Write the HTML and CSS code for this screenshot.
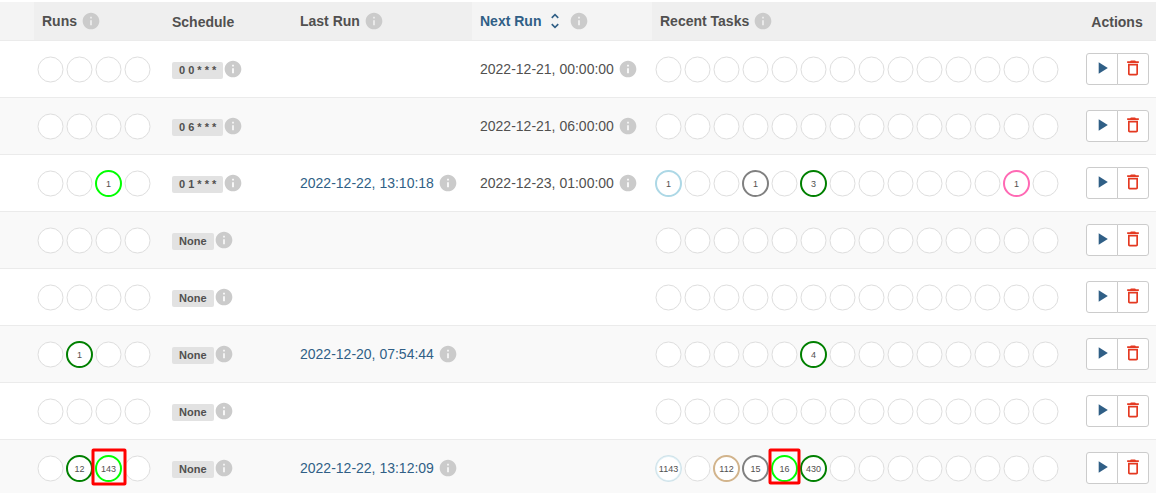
FILE: index.html
```html
<!DOCTYPE html>
<html lang="en">
<head>
<meta charset="utf-8">
<title>DAGs</title>
<link rel="stylesheet" href="styles.css">
</head>
<body>
<svg class="sprite" aria-hidden="true">
  <symbol id="info" viewBox="0 0 24 24"><path d="M12 2C6.48 2 2 6.48 2 12s4.480 10 10 10 10-4.480 10-10S17.520 2 12 2zm1 15h-2v-6h2v6zm0-8h-2V7h2v2z"/></symbol>
  <symbol id="sort" viewBox="0 0 24 24"><path d="M12 5.830L15.170 9l1.410-1.410L12 3 7.410 7.590 8.830 9 12 5.830zm0 12.340L8.830 15l-1.410 1.410L12 21l4.590-4.590L15.170 15 12 18.170z"/></symbol>
  <symbol id="play" viewBox="0 0 24 24"><path d="M8 5v14l11-7z"/></symbol>
  <symbol id="trash" viewBox="0 0 24 24"><path d="M6 19c0 1.100 .9 2 2 2h8c1.100 0 2-.9 2-2V7H6v12zM8 9h8v10H8V9zm7.500-5l-1-1h-5l-1 1H5v2h14V4z"/></symbol>
  <g id="slots4">
    <circle cx="14.5" cy="15.5" r="12.5"/><circle cx="43.5" cy="15.5" r="12.5"/><circle cx="72.5" cy="15.5" r="12.5"/><circle cx="101.5" cy="15.5" r="12.5"/>
  </g>
  <g id="slots14">
    <use href="#slots4"/><use href="#slots4" x="116"/><use href="#slots4" x="232"/>
    <circle cx="362.5" cy="15.5" r="12.5"/><circle cx="391.5" cy="15.5" r="12.5"/>
  </g>
</svg>
<main>
<table class="dags">
  <colgroup>
    <col class="col-lead"><col class="col-runs"><col class="col-schedule"><col class="col-date"><col class="col-date"><col class="col-tasks"><col class="col-actions">
  </colgroup>
  <thead>
    <tr>
      <th class="sortable"></th>
      <th>Runs <svg class="icon info"><use href="#info"/></svg></th>
      <th class="plain">Schedule</th>
      <th>Last Run <svg class="icon info"><use href="#info"/></svg></th>
      <th class="sortable"><a href="#next-run">Next Run <svg class="icon"><use href="#sort"/></svg></a> <svg class="icon info"><use href="#info"/></svg></th>
      <th>Recent Tasks <svg class="icon info"><use href="#info"/></svg></th>
      <th class="plain actions">Actions</th>
    </tr>
  </thead>
  <tbody>
    <tr>
      <td></td>
      <td class="states"><svg class="runs"><use href="#slots4"/></svg></td>
      <td><a class="label" href="#schedule">0 0 * * *</a><svg class="icon info"><use href="#info"/></svg></td>
      <td></td>
      <td><time>2022-12-21, 00:00:00</time> <svg class="icon info"><use href="#info"/></svg></td>
      <td class="states"><svg class="tasks"><use href="#slots14"/></svg></td>
      <td class="actions"><div class="btn-group"><button type="button" aria-label="Trigger DAG"><svg class="icon"><use href="#play"/></svg></button><button type="button" class="danger" aria-label="Delete DAG"><svg class="icon"><use href="#trash"/></svg></button></div></td>
    </tr>
    <tr>
      <td></td>
      <td class="states"><svg class="runs"><use href="#slots4"/></svg></td>
      <td><a class="label" href="#schedule">0 6 * * *</a><svg class="icon info"><use href="#info"/></svg></td>
      <td></td>
      <td><time>2022-12-21, 06:00:00</time> <svg class="icon info"><use href="#info"/></svg></td>
      <td class="states"><svg class="tasks"><use href="#slots14"/></svg></td>
      <td class="actions"><div class="btn-group"><button type="button" aria-label="Trigger DAG"><svg class="icon"><use href="#play"/></svg></button><button type="button" class="danger" aria-label="Delete DAG"><svg class="icon"><use href="#trash"/></svg></button></div></td>
    </tr>
    <tr>
      <td></td>
      <td class="states"><svg class="runs"><use href="#slots4"/>
        <g class="state running"><circle cx="72.5" cy="15.5" r="12.5"/><text x="72.5" y="19">1</text></g></svg></td>
      <td><a class="label" href="#schedule">0 1 * * *</a><svg class="icon info"><use href="#info"/></svg></td>
      <td><a href="#run"><time>2022-12-22, 13:10:18</time></a> <svg class="icon info"><use href="#info"/></svg></td>
      <td><time>2022-12-23, 01:00:00</time> <svg class="icon info"><use href="#info"/></svg></td>
      <td class="states"><svg class="tasks"><use href="#slots14"/>
        <g class="state none"><circle cx="14.5" cy="15.5" r="12.5"/><text x="14.5" y="19">1</text></g>
        <g class="state queued"><circle cx="101.5" cy="15.5" r="12.5"/><text x="101.5" y="19">1</text></g>
        <g class="state success"><circle cx="159.5" cy="15.5" r="12.5"/><text x="159.5" y="19">3</text></g>
        <g class="state skipped"><circle cx="362.5" cy="15.5" r="12.5"/><text x="362.5" y="19">1</text></g></svg></td>
      <td class="actions"><div class="btn-group"><button type="button" aria-label="Trigger DAG"><svg class="icon"><use href="#play"/></svg></button><button type="button" class="danger" aria-label="Delete DAG"><svg class="icon"><use href="#trash"/></svg></button></div></td>
    </tr>
    <tr>
      <td></td>
      <td class="states"><svg class="runs"><use href="#slots4"/></svg></td>
      <td><a class="label" href="#schedule">None</a><svg class="icon info"><use href="#info"/></svg></td>
      <td></td>
      <td></td>
      <td class="states"><svg class="tasks"><use href="#slots14"/></svg></td>
      <td class="actions"><div class="btn-group"><button type="button" aria-label="Trigger DAG"><svg class="icon"><use href="#play"/></svg></button><button type="button" class="danger" aria-label="Delete DAG"><svg class="icon"><use href="#trash"/></svg></button></div></td>
    </tr>
    <tr>
      <td></td>
      <td class="states"><svg class="runs"><use href="#slots4"/></svg></td>
      <td><a class="label" href="#schedule">None</a><svg class="icon info"><use href="#info"/></svg></td>
      <td></td>
      <td></td>
      <td class="states"><svg class="tasks"><use href="#slots14"/></svg></td>
      <td class="actions"><div class="btn-group"><button type="button" aria-label="Trigger DAG"><svg class="icon"><use href="#play"/></svg></button><button type="button" class="danger" aria-label="Delete DAG"><svg class="icon"><use href="#trash"/></svg></button></div></td>
    </tr>
    <tr>
      <td></td>
      <td class="states"><svg class="runs"><use href="#slots4"/>
        <g class="state success"><circle cx="43.5" cy="15.5" r="12.5"/><text x="43.5" y="19">1</text></g></svg></td>
      <td><a class="label" href="#schedule">None</a><svg class="icon info"><use href="#info"/></svg></td>
      <td><a href="#run"><time>2022-12-20, 07:54:44</time></a> <svg class="icon info"><use href="#info"/></svg></td>
      <td></td>
      <td class="states"><svg class="tasks"><use href="#slots14"/>
        <g class="state success"><circle cx="159.5" cy="15.5" r="12.5"/><text x="159.5" y="19">4</text></g></svg></td>
      <td class="actions"><div class="btn-group"><button type="button" aria-label="Trigger DAG"><svg class="icon"><use href="#play"/></svg></button><button type="button" class="danger" aria-label="Delete DAG"><svg class="icon"><use href="#trash"/></svg></button></div></td>
    </tr>
    <tr>
      <td></td>
      <td class="states"><svg class="runs"><use href="#slots4"/></svg></td>
      <td><a class="label" href="#schedule">None</a><svg class="icon info"><use href="#info"/></svg></td>
      <td></td>
      <td></td>
      <td class="states"><svg class="tasks"><use href="#slots14"/></svg></td>
      <td class="actions"><div class="btn-group"><button type="button" aria-label="Trigger DAG"><svg class="icon"><use href="#play"/></svg></button><button type="button" class="danger" aria-label="Delete DAG"><svg class="icon"><use href="#trash"/></svg></button></div></td>
    </tr>
    <tr>
      <td></td>
      <td class="states"><svg class="runs"><use href="#slots4"/>
        <g class="state success"><circle cx="43.5" cy="15.5" r="12.5"/><text x="43.5" y="19">12</text></g>
        <g class="state running"><circle cx="72.5" cy="15.5" r="12.5"/><text x="72.5" y="19">143</text></g>
        <rect class="highlight" x="57" y="-3" width="32" height="34" rx="0.5"/></svg></td>
      <td><a class="label" href="#schedule">None</a><svg class="icon info"><use href="#info"/></svg></td>
      <td><a href="#run"><time>2022-12-22, 13:12:09</time></a> <svg class="icon info"><use href="#info"/></svg></td>
      <td></td>
      <td class="states"><svg class="tasks"><use href="#slots14"/>
        <g class="state none faded"><circle cx="14.5" cy="15.5" r="12.5"/><text x="14.5" y="19">1143</text></g>
        <g class="state scheduled"><circle cx="72.5" cy="15.5" r="12.5"/><text x="72.5" y="19">112</text></g>
        <g class="state queued"><circle cx="101.5" cy="15.5" r="12.5"/><text x="101.5" y="19">15</text></g>
        <g class="state running"><circle cx="130.5" cy="15.5" r="12.5"/><text x="130.5" y="19">16</text></g>
        <g class="state success"><circle cx="159.5" cy="15.5" r="12.5"/><text x="159.5" y="19">430</text></g>
        <rect class="highlight" x="116" y="-3" width="29" height="33" rx="0.5"/></svg></td>
      <td class="actions"><div class="btn-group"><button type="button" aria-label="Trigger DAG"><svg class="icon"><use href="#play"/></svg></button><button type="button" class="danger" aria-label="Delete DAG"><svg class="icon"><use href="#trash"/></svg></button></div></td>
    </tr>
  </tbody>
</table>
</main>
</body>
</html>
```

FILE: styles.css
```css
* { box-sizing: border-box; }

body {
  margin: 0;
  padding-top: 2px;
  background: #fff;
  color: #51504f;
  font: 14px/20px "Liberation Sans", Arial, sans-serif;
}

a { color: #305f86; text-decoration: none; }

.sprite { position: absolute; width: 0; height: 0; }

.dags {
  width: 100%;
  table-layout: fixed;
  border-collapse: separate;
  border-spacing: 0;
}

.col-lead { width: 34px; }
.col-runs { width: 130px; }
.col-schedule { width: 128px; }
.col-date { width: 180px; }
.col-actions { width: 78px; }

th, td {
  padding: 0 0 0 8px;
  text-align: left;
  vertical-align: middle;
  white-space: nowrap;
}

th {
  height: 38px;
  background: #efefef;
}

th.sortable { background: #f4f4f4; }

td {
  height: 57px;
  border-top: 1px solid #ebebeb;
}

tbody tr:nth-child(even) { background: #f9f9f9; }

.icon {
  width: 20px;
  height: 20px;
  fill: currentColor;
  vertical-align: -5px;
}

.info { color: #cbcbcb; }

.label {
  display: inline-block;
  padding: 0 7px;
  border-radius: 2px;
  background: #e2e2e2;
  color: #51504f;
  font-size: 11px;
  font-weight: bold;
  line-height: 17px;
  vertical-align: middle;
}

td.states { padding-left: 2px; }

.states svg {
  display: block;
  height: 30px;
  overflow: visible;
  fill: #fff;
  stroke: #dedede;
  stroke-width: 1px;
}

.runs { width: 116px; }
.tasks { width: 406px; }

.state { stroke-width: 2px; }
.state text {
  fill: #51504f;
  stroke: none;
  font-size: 9px;
  text-anchor: middle;
}

.running { stroke: #00ff00; }
.success { stroke: #008000; }
.queued { stroke: #808080; }
.none { stroke: #add8e6; }
.skipped { stroke: #ff69b4; }
.scheduled { stroke: #d2b48c; }
.faded circle { stroke-opacity: 0.4; }

.highlight {
  fill: none;
  stroke: #ff0000;
  stroke-width: 3px;
}

th.plain { padding-top: 2px; }
th.actions { padding-left: 0; text-align: center; }

.btn-group { display: flex; }

.btn-group button {
  display: flex;
  padding: 4px 5px 6px;
  border: 1px solid #ccc;
  border-radius: 3px 0 0 3px;
  background: #fff;
  color: #305f86;
}

.btn-group button + button {
  margin-left: -1px;
  border-radius: 0 3px 3px 0;
}

.btn-group .danger { color: #e43921; }
```
